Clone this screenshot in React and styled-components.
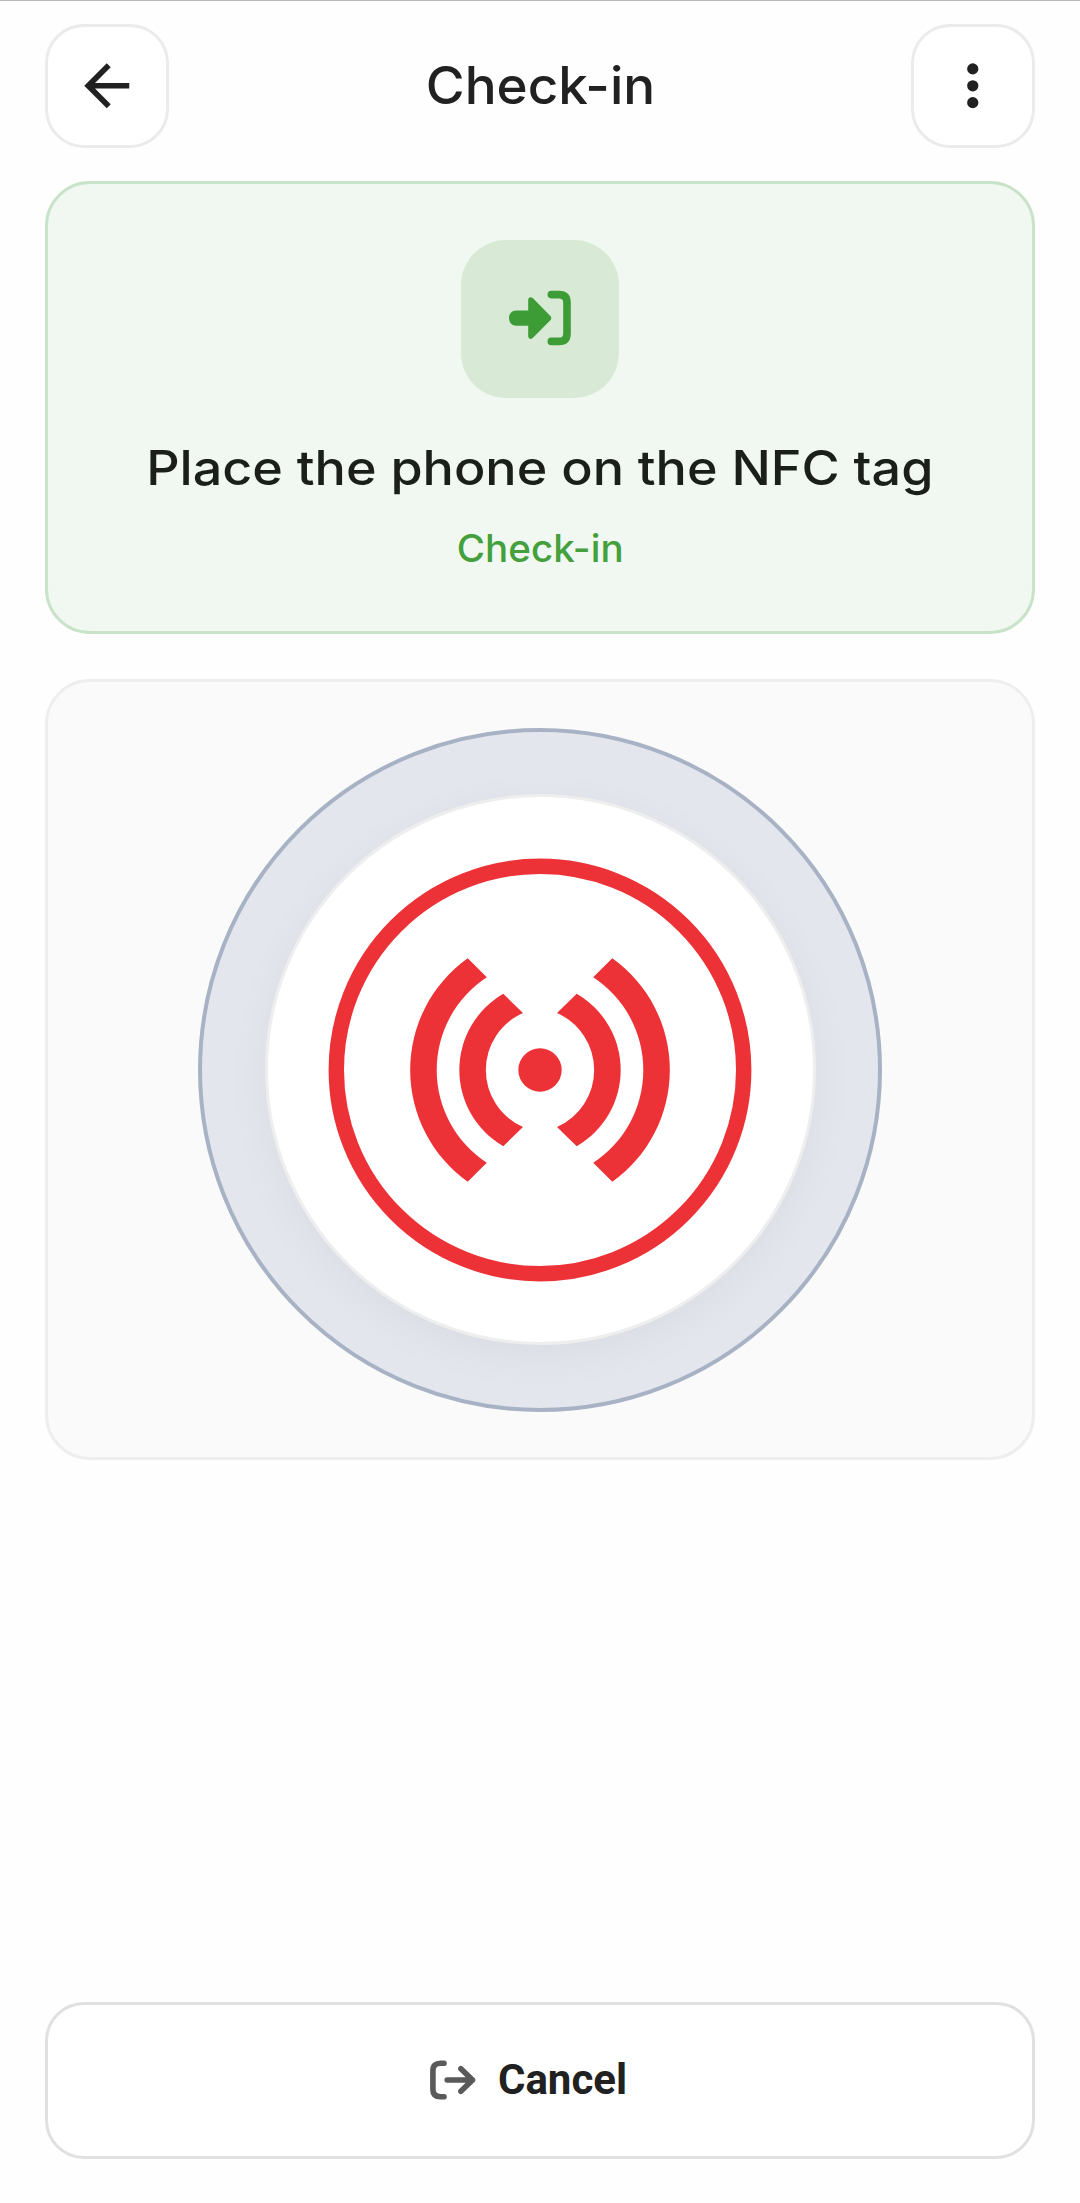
import styled, { createGlobalStyle } from "styled-components";

const GlobalStyle = createGlobalStyle`
  * {
    box-sizing: border-box;
  }
  body {
    margin: 0;
    background-color: #fefefe;
    color: #212121;
    font-family: Inter, sans-serif;
  }
`;

const Screen = styled.div`
  display: flex;
  flex-direction: column;
  height: 2203px;
  padding: 22.5px 45px 44px;
  border-top: 1px solid #b9b9b9;
`;

const Header = styled.header`
  display: flex;
  align-items: center;
  justify-content: space-between;
`;

const IconButton = styled.button`
  display: flex;
  align-items: center;
  justify-content: center;
  width: 124px;
  height: 124px;
  padding: 0;
  border: 3px solid #ebebeb;
  border-radius: 39px;
  background-color: #fff;
  color: #212121;
`;

const Title = styled.h1`
  margin: 0;
  font-size: 52px;
  font-weight: 450;
  line-height: 64px;
  transform: scaleX(${(props) => props.$stretch});
`;

const NoticeCard = styled.section`
  display: flex;
  flex-direction: column;
  align-items: center;
  height: 453px;
  margin-top: 33.5px;
  padding-top: 56px;
  border: 3px solid #c8e3c8;
  border-radius: 45px;
  background-color: #f1f8f1;
`;

const NoticeIcon = styled.div`
  display: flex;
  align-items: center;
  justify-content: center;
  width: 158px;
  height: 158px;
  padding-bottom: 2px;
  border-radius: 45px;
  background-color: #d8ead6;
`;

const NoticeTitle = styled.h2`
  margin: 40px 0 0;
  color: #1a1f1a;
  font-size: 48px;
  font-weight: 450;
  line-height: 60px;
  white-space: nowrap;
  transform: scaleX(${(props) => props.$stretch});
`;

const NoticeLabel = styled.p`
  margin: 27px 0 0;
  color: #43a03c;
  font-size: 38px;
  font-weight: 450;
  line-height: 46px;
  transform: scaleX(${(props) => props.$stretch});
`;

const ScanCard = styled.section`
  display: flex;
  align-items: center;
  justify-content: center;
  height: 781px;
  margin-top: 45px;
  border: 3px solid #eeeeee;
  border-radius: 45px;
  background-color: #fafafa;
`;

const Pulse = styled.div`
  display: flex;
  align-items: center;
  justify-content: center;
  width: 684px;
  height: 684px;
  border: 4px solid #a8b2c5;
  border-radius: 50%;
  background-color: #e3e6ed;
`;

const Disc = styled.div`
  display: flex;
  align-items: center;
  justify-content: center;
  width: 551px;
  height: 551px;
  border: 3px solid #eeeeee;
  border-radius: 50%;
  background-color: #fff;
  box-shadow: 0 11px 45px rgba(0, 0, 0, 0.045);
`;

const CancelButton = styled.button`
  display: flex;
  align-items: center;
  justify-content: center;
  gap: 22px;
  height: 157px;
  margin-top: auto;
  padding: 0 23px 2px 0;
  border: 3px solid #e0e0e0;
  border-radius: 39px;
  background-color: #fff;
  color: #212121;
  font-family: Roboto, sans-serif;
  font-size: 42px;
  font-weight: 700;
  line-height: 50px;
`;

const BackIcon = () => (
  <svg width="67.5" height="67.5" viewBox="0 0 24 24" fill="currentColor">
    <path d="M20 11H7.83l5.59-5.59L12 4l-8 8 8 8 1.41-1.41L7.83 13H20v-2z" />
  </svg>
);

const MoreIcon = () => (
  <svg width="67.5" height="67.5" viewBox="0 0 24 24" fill="currentColor">
    <circle cx="12" cy="6" r="2" />
    <circle cx="12" cy="12" r="2" />
    <circle cx="12" cy="18" r="2" />
  </svg>
);

const EnterIcon = () => (
  <svg width="62" height="56" viewBox="0 0 62 56" fill="none">
    <path
      d="M7.5 20.4H19.2V10C19.2 7 22 6.3 24 8.3L41.6 26.2C42.6 27.3 42.6 28.8 41.6 29.9L24 47.8C22 49.8 19.2 49.1 19.2 46.1V35.8H7.5C2.8 35.8 0 32.6 0 28.1S2.8 20.4 7.5 20.4Z"
      fill="#3d9c35"
    />
    <path
      d="M42.3 4.6H50Q58 4.6 58 12.6V43.4Q58 51.4 50 51.4H42.3"
      stroke="#3d9c35"
      strokeWidth="7.6"
      strokeLinecap="round"
    />
  </svg>
);

const NfcIcon = () => (
  <svg width="424" height="424" viewBox="-212 -212 424 424" fill="#ed3237">
    <circle r="203.7" fill="none" stroke="#ed3237" strokeWidth="15.4" />
    <circle r="21.7" />
    <path d="M-72.3 -111.8A137.4 137.4 0 0 0 -72.3 111.8L-53.2 92.8A111 111 0 0 1 -53.2 -92.8Z" />
    <path d="M-36.7 -76.2A88 88 0 0 0 -36.7 76.2L-17 57A62.3 62.3 0 0 1 -17 -57Z" />
    <path d="M72.3 -111.8A137.4 137.4 0 0 1 72.3 111.8L53.2 92.8A111 111 0 0 0 53.2 -92.8Z" />
    <path d="M36.7 -76.2A88 88 0 0 1 36.7 76.2L17 57A62.3 62.3 0 0 0 17 -57Z" />
  </svg>
);

const ExitIcon = () => (
  <svg
    width="46"
    height="40"
    viewBox="0 0 46 40"
    fill="none"
    stroke="#5a5a5a"
    strokeWidth="5.6"
    strokeLinecap="round"
    strokeLinejoin="round"
  >
    <path d="M14 3.3H10.5Q2.9 3.3 2.9 10.5V29.5Q2.9 36.7 10.5 36.7H14" />
    <path d="M17.2 20H42.5M30.9 8.8L42.5 20L30.9 31.2" />
  </svg>
);

const App = () => {
  return (
    <>
      <GlobalStyle />
      <Screen>
        <Header>
          <IconButton aria-label="Back">
            <BackIcon />
          </IconButton>
          <Title $stretch={1.02}>Check-in</Title>
          <IconButton aria-label="More">
            <MoreIcon />
          </IconButton>
        </Header>
        <NoticeCard>
          <NoticeIcon>
            <EnterIcon />
          </NoticeIcon>
          <NoticeTitle $stretch={1.085}>
            Place the phone on the NFC tag
          </NoticeTitle>
          <NoticeLabel $stretch={1.015}>Check-in</NoticeLabel>
        </NoticeCard>
        <ScanCard>
          <Pulse>
            <Disc>
              <NfcIcon />
            </Disc>
          </Pulse>
        </ScanCard>
        <CancelButton>
          <ExitIcon />
          Cancel
        </CancelButton>
      </Screen>
    </>
  );
};

export default App;
